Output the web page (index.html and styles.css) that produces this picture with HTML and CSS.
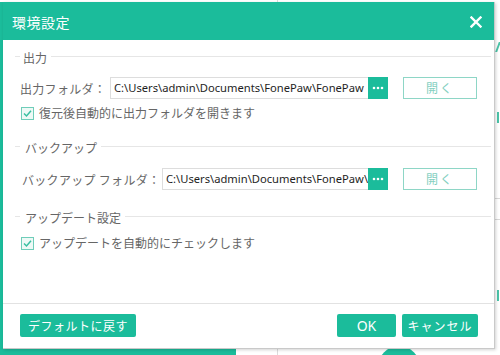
FILE: index.html
```html
<!DOCTYPE html>
<html lang="ja">
<head>
<meta charset="utf-8">
<title>環境設定</title>
<link rel="stylesheet" href="styles.css">
</head>
<body>
<div class="desktop">
  <div class="bg-panel"></div>
  <div class="bg-divider"></div>
  <div class="bg-circle"></div>
  <div class="bg-right">
    <span class="bg-mark m1"></span>
    <span class="bg-mark m2"></span>
    <span class="bg-rule r1"></span>
    <span class="bg-rule r2"></span>
    <span class="bg-mark m3"></span>
  </div>

  <div class="dialog">
    <div class="titlebar">
      <span class="title">環境設定</span>
      <svg class="close" width="12" height="12" viewBox="0 0 12 12"><path d="M1.5 1.5 L10.5 10.5 M10.5 1.5 L1.5 10.5" stroke="#fff" stroke-width="2.4" stroke-linecap="square"/></svg>
    </div>

    <div class="content">
      <div class="legend first"><span class="lead"></span><span class="legend-text">出力</span><span class="rule"></span></div>
      <div class="row row-first">
        <span class="label label-out">出力フォルダ：</span>
        <div class="path"><span class="path-text">C:\Users\admin\Documents\FonePaw\FonePaw</span></div>
        <div class="dots"><svg width="12" height="4" viewBox="0 0 12 4"><circle cx="2" cy="2" r="1.3" fill="#fff"/><circle cx="6" cy="2" r="1.3" fill="#fff"/><circle cx="10" cy="2" r="1.3" fill="#fff"/></svg></div>
        <div class="open-btn">開く</div>
      </div>
      <div class="check check-first">
        <svg class="box" width="13" height="13" viewBox="0 0 13 13"><rect x="0.5" y="0.5" width="12" height="12" fill="#eef9f6" stroke="#6fcdb9"/><path d="M3 6.5 L5.5 9 L10 3.8" fill="none" stroke="#39bfa2" stroke-width="1.5"/></svg>
        <span class="check-text">復元後自動的に出力フォルダを開きます</span>
      </div>

      <div class="legend second"><span class="lead"></span><span class="legend-text">バックアップ</span><span class="rule"></span></div>
      <div class="row row-second">
        <span class="label label-bak">バックアップ フォルダ：</span>
        <div class="path"><span class="path-text">C:\Users\admin\Documents\FonePaw\</span></div>
        <div class="dots"><svg width="12" height="4" viewBox="0 0 12 4"><circle cx="2" cy="2" r="1.3" fill="#fff"/><circle cx="6" cy="2" r="1.3" fill="#fff"/><circle cx="10" cy="2" r="1.3" fill="#fff"/></svg></div>
        <div class="open-btn">開く</div>
      </div>

      <div class="legend third"><span class="lead"></span><span class="legend-text">アップデート設定</span><span class="rule"></span></div>
      <div class="check check-second">
        <svg class="box" width="13" height="13" viewBox="0 0 13 13"><rect x="0.5" y="0.5" width="12" height="12" fill="#eef9f6" stroke="#6fcdb9"/><path d="M3 6.5 L5.5 9 L10 3.8" fill="none" stroke="#39bfa2" stroke-width="1.5"/></svg>
        <span class="check-text">アップデートを自動的にチェックします</span>
      </div>
    </div>

    <div class="footer">
      <div class="btn btn-default">デフォルトに戻す</div>
      <div class="footer-right">
        <div class="btn btn-ok">OK</div>
        <div class="btn btn-cancel">キャンセル</div>
      </div>
    </div>
  </div>
</div>
</body>
</html>
```

FILE: styles.css
```css
* { box-sizing: border-box; }
html, body { margin: 0; padding: 0; }
body {
  width: 500px;
  height: 355px;
  overflow: hidden;
  background: #ffffff;
  font-family: "Noto Sans CJK JP", "Noto Sans", sans-serif;
}
.desktop {
  position: relative;
  width: 500px;
  height: 355px;
  overflow: hidden;
}

/* background application fragments */
.bg-panel {
  position: absolute;
  left: 0;
  top: 2px;
  width: 236px;
  height: 353px;
  background: #1bbc9b;
}
.bg-divider {
  position: absolute;
  left: 277px;
  top: 0;
  width: 1px;
  height: 355px;
  background: #dcdcdc;
}
.bg-circle {
  position: absolute;
  left: 378px;
  top: 346px;
  width: 42px;
  height: 42px;
  border-radius: 50%;
  background: #1bbc9b;
}
.bg-right {
  position: absolute;
  left: 495px;
  top: 0;
  width: 5px;
  height: 355px;
}
.bg-mark {
  position: absolute;
  left: 2px;
  width: 2px;
  background: #4cc3a8;
}
.m1 { top: 42px; height: 10px; transform: skewX(-20deg); }
.m2 { top: 112px; height: 11px; }
.m3 { top: 290px; height: 11px; }
.bg-rule {
  position: absolute;
  left: 0;
  width: 5px;
  height: 1px;
  background: #d8d8d8;
}
.r1 { top: 198px; }
.r2 { top: 219px; }

/* dialog window */
.dialog {
  position: absolute;
  left: 3px;
  top: 2px;
  width: 492px;
  height: 347px;
  background: #ffffff;
  border-right: 1px solid #c9c9c9;
  border-bottom: 1px solid #c9c9c9;
  box-shadow: 1px 1px 3px rgba(0,0,0,0.18);
  display: flex;
  flex-direction: column;
}
.titlebar {
  height: 38px;
  flex: none;
  background: #1bbc9b;
  display: flex;
  align-items: center;
  justify-content: space-between;
  padding: 0 12px 0 9px;
}
.title {
  color: #ffffff;
  font-size: 14px;
  letter-spacing: 0.5px;
  line-height: 16px;
  margin-top: 1px;
}
.close { display: block; margin-top: 2px; }

.content {
  flex: 1;
  padding: 0 3px 0 12px;
  border-bottom: 1px solid #e2e2e2;
}
.legend {
  display: flex;
  align-items: center;
  height: 14px;
}
.legend.first { margin-top: 11px; }
.legend.second { margin-top: 21px; }
.legend.third { margin-top: 21px; }
.lead {
  width: 5px;
  height: 1px;
  background: #e6e6e6;
  flex: none;
  margin-top: -3px;
}
.rule {
  flex: 1;
  height: 1px;
  background: #e6e6e6;
  margin-top: -3px;
}
.legend-text {
  font-size: 12px;
  color: #666;
  line-height: 14px;
  padding: 0 4px 0 3px;
}
.second .legend-text, .third .legend-text { padding-left: 5px; }

.row {
  display: flex;
  align-items: center;
  height: 22px;
  padding-right: 14px;
}
.row-first { margin-top: 12px; padding-left: 5px; }
.row-second { margin-top: 13px; padding-left: 7px; }
.label {
  flex: none;
  font-size: 12px;
  color: #666;
  white-space: nowrap;
  letter-spacing: 0.3px;
}
.label-out { width: 90px; }
.label-bak { width: 140px; }
.path {
  flex: 1;
  min-width: 0;
  height: 22px;
  border: 1px solid #dddddd;
  border-right: none;
  padding: 0 0 0 3px;
  overflow: hidden;
}
.path-text {
  display: block;
  font-family: "Noto Sans", "Liberation Sans", sans-serif;
  font-size: 11.2px;
  line-height: 20px;
  color: #1e1e1e;
  white-space: nowrap;
  overflow: hidden;
}
.dots {
  flex: none;
  width: 20px;
  height: 22px;
  background: #1bbc9b;
  display: flex;
  align-items: center;
  justify-content: center;
}
.dots svg { display: block; }
.open-btn {
  flex: none;
  width: 74px;
  height: 22px;
  margin-left: 15px;
  border: 1px solid #8ed6c6;
  color: #84cfbf;
  font-size: 12px;
  line-height: 20px;
  text-align: center;
  letter-spacing: 2px;
}

.check {
  display: flex;
  align-items: center;
  height: 14px;
  padding-left: 6px;
}
.check-first { margin-top: 7px; }
.check-second { margin-top: 11px; }
.box { display: block; flex: none; }
.check-text {
  font-size: 12px;
  color: #666;
  margin-left: 5px;
  letter-spacing: 0;
  line-height: 14px;
}

.footer {
  height: 44px;
  flex: none;
  display: flex;
  align-items: flex-start;
  justify-content: space-between;
  padding: 10px 16px 0 17px;
}
.footer-right { display: flex; gap: 6px; }
.btn {
  height: 23px;
  background: #1bbc9b;
  color: #ffffff;
  border-radius: 2px;
  font-size: 12px;
  line-height: 23px;
  text-align: center;
}
.btn-default { width: 116px; letter-spacing: 0.5px; }
.btn-ok {
  width: 59px;
  font-family: "Noto Sans", "Liberation Sans", sans-serif;
  font-size: 14px;
}
.btn-cancel { width: 76px; letter-spacing: 1px; }
```
